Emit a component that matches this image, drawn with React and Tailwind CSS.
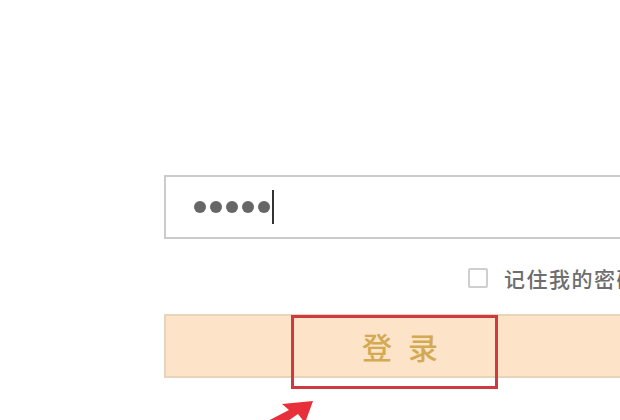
import React from "react";

const App = () => {
  return (
    <div
      className="relative w-[620px] h-[420px] overflow-hidden bg-white"
      style={{ fontFamily: '"Noto Sans CJK SC", "Noto Sans", sans-serif' }}
    >
      <div className="flex flex-col pl-[164px] pt-[175px] w-[900px]">
        {/* password field */}
        <div className="flex items-center h-[64px] border-2 border-[#cbcbcb] bg-white pl-[28px]">
          <div className="flex items-center gap-[4px]">
            <span className="w-[12px] h-[12px] rounded-full bg-[#666]" />
            <span className="w-[12px] h-[12px] rounded-full bg-[#666]" />
            <span className="w-[12px] h-[12px] rounded-full bg-[#666]" />
            <span className="w-[12px] h-[12px] rounded-full bg-[#666]" />
            <span className="w-[12px] h-[12px] rounded-full bg-[#666]" />
          </div>
          <span className="ml-[2px] w-[2px] h-[34px] bg-[#333]" />
        </div>

        {/* remember me */}
        <div className="flex items-center h-[20px] mt-[29px] pl-[304px]">
          <span className="w-[20px] h-[20px] border-2 border-[#cfcfcf] rounded-[2px] bg-white" />
          <span className="ml-[16px] text-[21px] leading-none tracking-[1.5px] font-medium text-[#6e6e6e] whitespace-nowrap">
            记住我的密码
          </span>
        </div>

        {/* login button */}
        <button className="flex items-center h-[64px] mt-[26px] border-2 border-[#e8d4b8] bg-[#fde4c9] pl-[196px]">
          <span className="text-[30px] leading-none tracking-[16px] font-medium text-[#d3aa52]">登录</span>
        </button>
      </div>

      {/* annotation box */}
      <div className="absolute left-[291px] top-[315px] w-[207px] h-[74px] border-[3px] border-[#cf3a40]" />

      {/* annotation arrow */}
      <svg
        className="absolute left-0 top-0"
        width="620"
        height="420"
        viewBox="0 0 620 420"
      >
        <polygon
          points="313,401 305,423 298,414 272,432 262,424 289,410 282,404"
          fill="#e8303a"
        />
      </svg>
    </div>
  );
};

export default App;
